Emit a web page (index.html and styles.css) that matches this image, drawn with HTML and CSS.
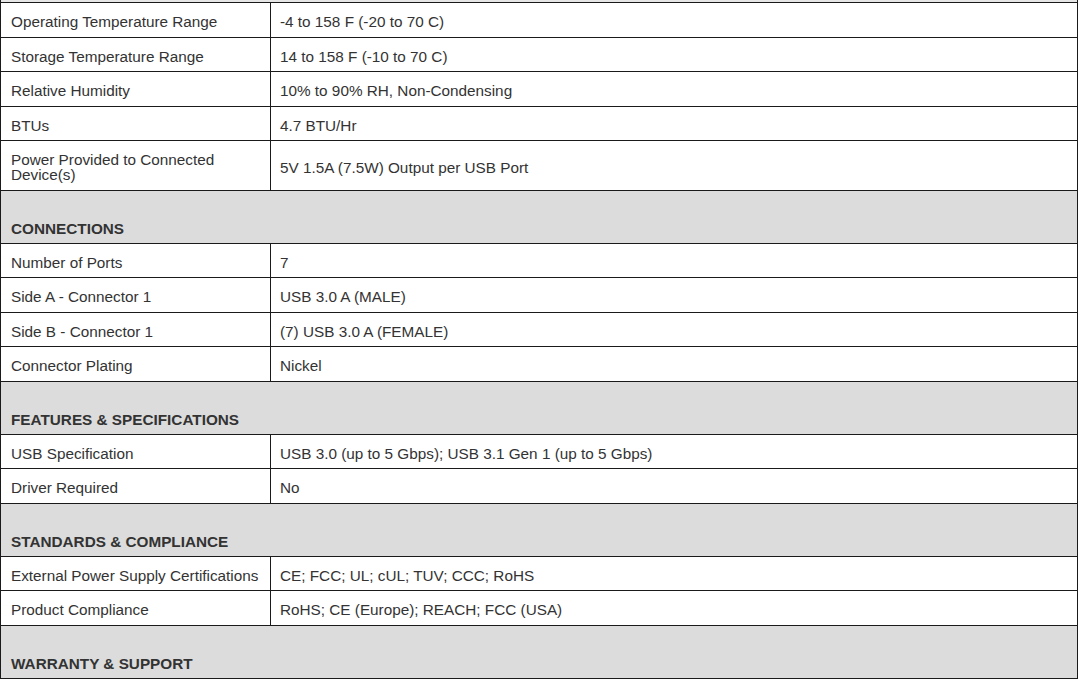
FILE: index.html
```html
<!DOCTYPE html>
<html lang="en">
<head>
<meta charset="utf-8">
<title>Specifications</title>
<link rel="stylesheet" href="styles.css">
</head>
<body>
<div class="specs">
  <div class="section section-cut"></div>

  <div class="row"><div class="label">Operating Temperature Range</div><div class="value">-4 to 158 F (-20 to 70 C)</div></div>
  <div class="row"><div class="label">Storage Temperature Range</div><div class="value">14 to 158 F (-10 to 70 C)</div></div>
  <div class="row"><div class="label">Relative Humidity</div><div class="value">10% to 90% RH, Non-Condensing</div></div>
  <div class="row"><div class="label">BTUs</div><div class="value">4.7 BTU/Hr</div></div>
  <div class="row"><div class="label">Power Provided to Connected Device(s)</div><div class="value">5V 1.5A (7.5W) Output per USB Port</div></div>

  <div class="section">CONNECTIONS</div>
  <div class="row"><div class="label">Number of Ports</div><div class="value">7</div></div>
  <div class="row"><div class="label">Side A - Connector 1</div><div class="value">USB 3.0 A (MALE)</div></div>
  <div class="row"><div class="label">Side B - Connector 1</div><div class="value">(7) USB 3.0 A (FEMALE)</div></div>
  <div class="row"><div class="label">Connector Plating</div><div class="value">Nickel</div></div>

  <div class="section">FEATURES &amp; SPECIFICATIONS</div>
  <div class="row"><div class="label">USB Specification</div><div class="value">USB 3.0 (up to 5 Gbps); USB 3.1 Gen 1 (up to 5 Gbps)</div></div>
  <div class="row"><div class="label">Driver Required</div><div class="value">No</div></div>

  <div class="section">STANDARDS &amp; COMPLIANCE</div>
  <div class="row"><div class="label">External Power Supply Certifications</div><div class="value">CE; FCC; UL; cUL; TUV; CCC; RoHS</div></div>
  <div class="row"><div class="label">Product Compliance</div><div class="value">RoHS; CE (Europe); REACH; FCC (USA)</div></div>

  <div class="section">WARRANTY &amp; SUPPORT</div>
</div>
</body>
</html>
```
FILE: styles.css
```css
* { box-sizing: border-box; }

html, body {
  margin: 0;
  padding: 0;
  background: #ffffff;
}

body {
  font-family: "Liberation Sans", Arial, sans-serif;
  font-size: 15.3px;
  line-height: 15px;
  color: #333333;
}

.specs {
  width: 1078px;
  border-left: 1px solid #1a1a1a;
  border-right: 1px solid #1a1a1a;
  display: flex;
  flex-direction: column;
}

.row {
  display: grid;
  grid-template-columns: 270px 1fr;
  border-bottom: 1px solid #1a1a1a;
  background: #ffffff;
}

.label,
.value {
  display: flex;
  align-items: center;
  min-height: 33.5px;
  padding: 11px 10px 7.5px;
}

.value {
  padding-left: 9px;
}

.label {
  border-right: 1px solid #1a1a1a;
}

.section {
  background: #dcdcdc;
  border-bottom: 1px solid #1a1a1a;
  font-size: 15.3px;
  font-weight: bold;
  padding: 30px 10px 7px;
  height: 53px;
}

.section-cut {
  height: 3px;
  padding: 0;
  background: #e6e6e6;
}
```
